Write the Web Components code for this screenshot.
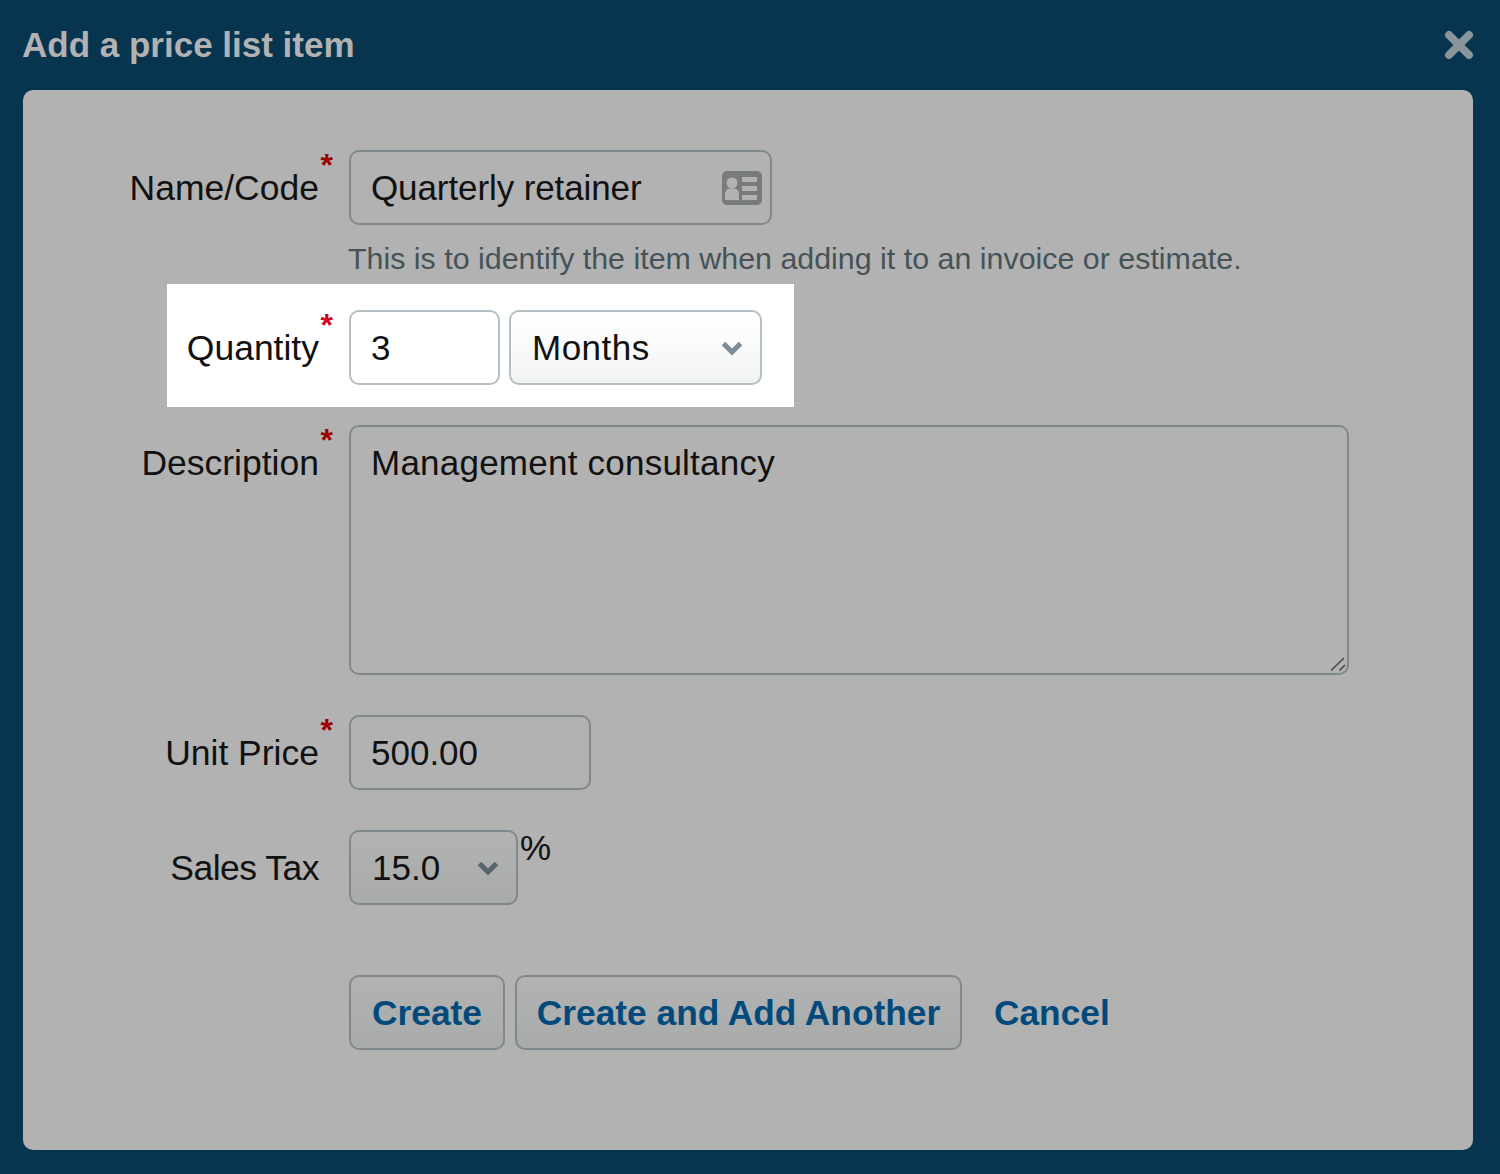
<!DOCTYPE html>
<html>
<head>
<meta charset="utf-8">
<title>Add a price list item</title>
<style>
  html, body { margin: 0; padding: 0; background: #07344f; }
  body { font-family: "Liberation Sans", Arial, sans-serif; }
</style>
</head>
<body>
<price-dialog heading="Add a price list item">
  <form-row label="Name/Code" required>
    <text-field width="423" style="letter-spacing:-.1px">
      Quarterly retainer
      <svg slot="icon" width="40" height="34" viewBox="0 0 40 34">
        <rect width="40" height="34" rx="5" fill="#787b7c"/>
        <circle cx="10" cy="12" r="5.500" fill="#b2b2b2"/>
        <path d="M3 29v-6c0-3.500 2.500-5.500 5-5.500h4c2.500 0 5 2 5 5.500v6z" fill="#b2b2b2"/>
        <path d="M20 6h15v5H20zM20 15h15v5H20zM20 24h15v5H20z" fill="#b2b2b2"/>
      </svg>
    </text-field>
  </form-row>
  <hint-text>This is to identify the item when adding it to an invoice or estimate.</hint-text>
  <form-row label="Quantity" required highlight>
    <text-field width="151" bright>3</text-field>
    <select-field width="253" bright style="letter-spacing:.5px">Months</select-field>
  </form-row>
  <form-row label="Description" required>
    <text-box style="letter-spacing:.23px">Management consultancy</text-box>
  </form-row>
  <form-row label="Unit Price" required gap="40">
    <text-field width="242">500.00</text-field>
  </form-row>
  <form-row label="Sales Tax" gap="40" tight style="letter-spacing:-.5px">
    <select-field width="169" style="letter-spacing:0">15.0</select-field>
    <span style="font-size:35px;line-height:36px;color:#111;height:36px;align-self:flex-start;letter-spacing:0">%</span>
  </form-row>
  <form-row gap="70">
    <action-button width="156">Create</action-button>
    <action-button width="447">Create and Add Another</action-button>
    <a style="font-size:35.300px;font-weight:700;color:#034a7c;margin-left:22px;align-self:center">Cancel</a>
  </form-row>
</price-dialog>

<script>
  const FIELD_CSS = `
    box-sizing: border-box;
    height: 75px;
    border: 2px solid #7f898d;
    border-radius: 10px;
    font-size: 35px;
    color: #111;
  `;

  class PriceDialog extends HTMLElement {
    constructor() {
      super();
      this.attachShadow({ mode: "open" });
      this.shadowRoot.innerHTML = `
        <style>
          :host { display: block; height: 1174px; box-sizing: border-box; padding: 0 27px 24px 23px; }
          header { height: 90px; display: flex; align-items: center; justify-content: space-between; margin-left: -1px; margin-right: -1px; }
          h1 { margin: 0; font-size: 35px; font-weight: 700; color: #b2b2b2; }
          .panel { height: 1060px; box-sizing: border-box; background: #b2b2b2; border-radius: 10px; padding-top: 60px; }
          svg { display: block; }
        </style>
        <header>
          <h1></h1>
          <svg width="30" height="30" viewBox="0 0 30 30"><path d="M5 5L25 25M25 5L5 25" stroke="#8a959b" stroke-width="8" stroke-linecap="round"/></svg>
        </header>
        <div class="panel"><slot></slot></div>
      `;
      this.shadowRoot.querySelector("h1").textContent = this.getAttribute("heading");
    }
  }

  class FormRow extends HTMLElement {
    constructor() {
      super();
      this.attachShadow({ mode: "open" });
      const label = this.getAttribute("label") || "";
      const star = this.hasAttribute("required") ? `<i>*</i>` : "";
      this.shadowRoot.innerHTML = `
        <style>
          :host { display: flex; gap: 10px; }
          :host([tight]) { gap: 2px; }
          :host([highlight]) { gap: 9px; background: #fff; width: fit-content; margin: 0 0 18px 144px; padding: 26px 32px 22px 0; }
          .label {
            position: relative;
            box-sizing: border-box;
            width: 296px;
            margin-right: 20px;
            height: 75px;
            line-height: 77px;
            text-align: right;
            font-size: 35.500px;
            color: #111;
            white-space: nowrap;
          }
          :host([tight]) .label { margin-right: 28px; }
          :host([highlight]) .label { width: 152px; margin-right: 21px; }
          i {
            position: absolute;
            right: -14px;
            top: 0;
            font-style: normal;
            font-weight: 700;
            font-size: 32px;
            line-height: 30px;
            color: #9b0000;
          }
          :host([highlight]) i { color: #d0021b; }
        </style>
        <div class="label">${label}${star}</div>
        <slot></slot>
      `;
      const gap = this.getAttribute("gap");
      if (gap) this.style.marginTop = gap + "px";
    }
  }

  class TextField extends HTMLElement {
    constructor() {
      super();
      this.attachShadow({ mode: "open" });
      this.shadowRoot.innerHTML = `
        <style>
          :host { ${FIELD_CSS} display: flex; align-items: center; justify-content: space-between; padding: 0 8px 0 20px; white-space: nowrap; }
          :host([bright]) { background: #fff; border-color: #b5c0c6; }
          span { padding-top: 1px; }
        </style>
        <span><slot></slot></span>
        <slot name="icon"></slot>
      `;
      this.style.width = this.getAttribute("width") + "px";
    }
  }

  class SelectField extends HTMLElement {
    constructor() {
      super();
      this.attachShadow({ mode: "open" });
      this.shadowRoot.innerHTML = `
        <style>
          :host {
            ${FIELD_CSS}
            display: flex; align-items: center; justify-content: space-between;
            padding: 0 16px 0 21px;
            background: linear-gradient(#b2b2b2, #a9abab);
            --chev: #58656b;
          }
          :host([bright]) { background: linear-gradient(#fff, #f2f4f4); border-color: #b5c0c6; --chev: #7e8c96; }
          span { padding-top: 1px; }
          svg { display: block; }
        </style>
        <span><slot></slot></span>
        <svg width="24" height="16" viewBox="0 0 24 16"><path d="M3.500 3.500L12 12L20.500 3.500" fill="none" stroke="var(--chev)" stroke-width="5"/></svg>
      `;
      this.style.width = this.getAttribute("width") + "px";
    }
  }

  class TextBox extends HTMLElement {
    constructor() {
      super();
      this.attachShadow({ mode: "open" });
      this.shadowRoot.innerHTML = `
        <style>
          :host { ${FIELD_CSS} display: block; position: relative; width: 1000px; height: 250px; padding: 16px 20px; line-height: 40px; }
          svg { position: absolute; right: 1px; bottom: 2px; }
        </style>
        <slot></slot>
        <svg width="16" height="14" viewBox="0 0 16 14"><path d="M1 13.500L14 1M9.500 13.500L15 8" stroke="#4a4a4a" stroke-width="1.600"/></svg>
      `;
    }
  }

  class ActionButton extends HTMLElement {
    constructor() {
      super();
      this.attachShadow({ mode: "open" });
      this.shadowRoot.innerHTML = `
        <style>
          :host {
            ${FIELD_CSS}
            display: flex; align-items: center; justify-content: center;
            background: linear-gradient(#b2b2b2, #a9abab);
            font-weight: 700;
            font-size: 35.300px;
            color: #034a7c;
            white-space: nowrap;
          }
        </style>
        <slot></slot>
      `;
      this.style.width = this.getAttribute("width") + "px";
    }
  }

  class HintText extends HTMLElement {
    constructor() {
      super();
      this.attachShadow({ mode: "open" });
      this.shadowRoot.innerHTML = `
        <style>
          :host { display: block; margin: 13px 0 6px 325px; height: 40px; line-height: 40px; font-size: 30.400px; color: #465257; white-space: nowrap; }
        </style>
        <slot></slot>
      `;
    }
  }

  customElements.define("price-dialog", PriceDialog);
  customElements.define("form-row", FormRow);
  customElements.define("text-field", TextField);
  customElements.define("select-field", SelectField);
  customElements.define("text-box", TextBox);
  customElements.define("action-button", ActionButton);
  customElements.define("hint-text", HintText);
</script>
</body>
</html>
